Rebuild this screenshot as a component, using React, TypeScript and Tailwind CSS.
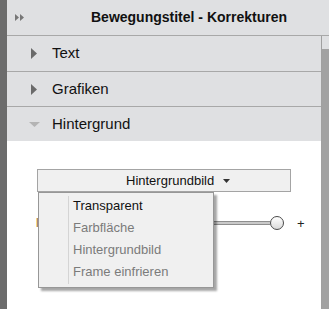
const MENU = [
  { label: "Transparent", active: true },
  { label: "Farbfläche", active: false },
  { label: "Hintergrundbild", active: false },
  { label: "Frame einfrieren", active: false },
];

const ROWS = [
  { label: "Text", h: "h-9", border: true },
  { label: "Grafiken", h: "h-[35px]", border: true },
];

function RightArrow() {
  return (
    <svg width="6" height="11" viewBox="0 0 6 11" className="shrink-0">
      <path d="M0 0 L6 5.5 L0 11 Z" fill="#6a6a6a" />
    </svg>
  );
}

export default function App() {
  return (
    <div className="flex h-[309px] w-[329px] overflow-hidden bg-white font-['Liberation_Sans',Arial,sans-serif] text-[#111]">
      <div className="w-[7px] shrink-0 bg-[#6c6c6c]" />
      <div className="flex min-w-0 flex-1 flex-col">
        {/* panel title */}
        <header className="flex h-9 shrink-0 items-center border-b border-[#a8a8a8] bg-[#dfe0e2]">
          <svg width="9" height="7" viewBox="0 0 9 7" className="ml-[8px]">
            <path d="M0 0 L4 3.5 L0 7 Z M5 0 L9 3.5 L5 7 Z" fill="#777" />
          </svg>
          <span className="ml-[67px] text-[14px] font-bold">
            Bewegungstitel - Korrekturen
          </span>
        </header>

        <div className="flex min-h-0 flex-1">
          <div className="flex min-w-0 flex-1 flex-col">
            {ROWS.map((r) => (
              <div
                key={r.label}
                className={`flex ${r.h} shrink-0 items-center gap-[15px] border-b border-[#a8a8a8] bg-[#dfe0e2] pl-[24px] text-[15px]`}
              >
                <RightArrow />
                {r.label}
              </div>
            ))}
            <div className="flex h-[34px] shrink-0 items-center gap-[12px] bg-[#dfe0e2] pl-[22px] text-[15px]">
              <svg width="11" height="5" viewBox="0 0 11 5" className="shrink-0">
                <path d="M0 0 L11 0 L5.5 5 Z" fill="#b4b4b4" />
              </svg>
              Hintergrund
            </div>

            {/* section body */}
            <div className="flex-1 bg-white pl-[30px] pt-[28px]">
              <div className="relative w-[254px]">
                <button className="flex h-[23px] w-full items-center border border-[#a4a4a4] bg-[#f0f0f0] pl-[88px] text-[13px] text-[#111]">
                  Hintergrundbild
                  <svg width="7" height="4" viewBox="0 0 7 4" className="ml-[9px]">
                    <path d="M0 0 L7 0 L3.5 4 Z" fill="#333" />
                  </svg>
                </button>

                {/* slider row, partly hidden by the menu */}
                <div className="mt-[23px] flex h-4 items-center">
                  <span className="-ml-[1px] text-[12px] leading-none text-[#9a6a10]">l</span>
                  <div className="ml-auto h-[4px] w-[70px] border-y border-[#8e8e8e] bg-[#c9c9c9]" />
                  <div className="h-[14px] w-[14px] shrink-0 rounded-full border border-[#4a4a4a] bg-gradient-to-b from-white to-[#dadada]" />
                  <span className="-mr-[6px] ml-[13px] w-0 whitespace-nowrap text-[13px] leading-none text-[#222]">+</span>
                </div>

                <div className="absolute left-[1px] top-[23px] w-[176px] border border-[#979797] bg-[#f0f0f0] pb-[4px] pt-[2px] shadow-[3px_3px_2px_rgba(0,0,0,0.35)]">
                  <div className="absolute bottom-[3px] left-[29px] top-[3px] w-px bg-[#d4d4d4]" />
                  {MENU.map((m) => (
                    <div
                      key={m.label}
                      className={`flex h-[22px] items-center pl-[34px] text-[13px] ${
                        m.active ? "text-[#111]" : "text-[#7b7b7b]"
                      }`}
                    >
                      {m.label}
                    </div>
                  ))}
                </div>
              </div>
            </div>
          </div>

          {/* scrollbar */}
          <div className="flex w-[8px] shrink-0 flex-col border-l border-[#a0a0a0]">
            <div className="h-[13px] bg-[#dfe0e2]" />
            <div className="flex-1 bg-[#a2a2a2]" />
          </div>
        </div>
      </div>
    </div>
  );
}
